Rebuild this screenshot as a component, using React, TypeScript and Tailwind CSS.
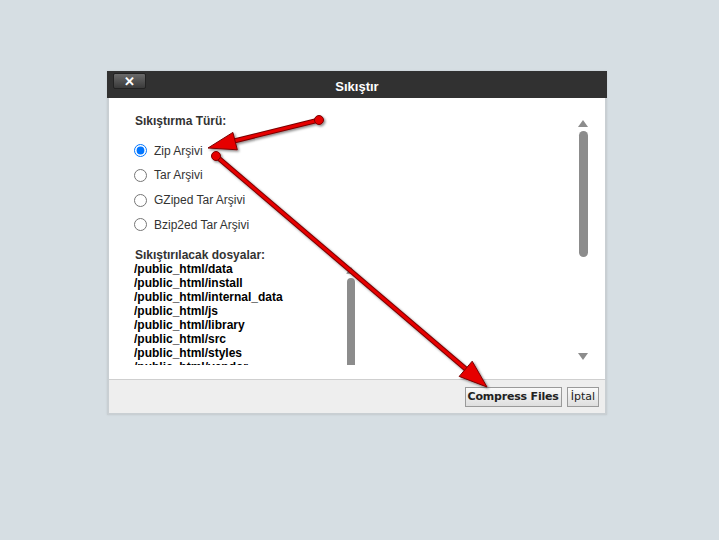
import React from 'react';

const archiveTypes = ['Zip Arşivi', 'Tar Arşivi', 'GZiped Tar Arşivi', 'Bzip2ed Tar Arşivi'];

const files = [
  '/public_html/data',
  '/public_html/install',
  '/public_html/internal_data',
  '/public_html/js',
  '/public_html/library',
  '/public_html/src',
  '/public_html/styles',
  '/public_html/vendor',
];

function Annotations() {
  return (
    <svg
      className="pointer-events-none absolute left-0 top-0"
      width="719"
      height="540"
      viewBox="0 0 719 540"
    >
      <defs>
        <filter id="shadow" x="-10%" y="-10%" width="120%" height="120%">
          <feDropShadow dx="1.5" dy="1.5" stdDeviation="1.2" floodColor="#000" floodOpacity="0.45" />
        </filter>
      </defs>
      <g filter="url(#shadow)">
        {/* arrow to Zip */}
        <line x1="319" y1="120" x2="234" y2="141" stroke="#7a0000" strokeWidth="5" strokeLinecap="round" />
        <line x1="319" y1="120" x2="234" y2="141" stroke="#e60000" strokeWidth="3" strokeLinecap="round" />
        <polygon points="208,148 237.3,149.8 232.9,132.4" fill="#e60000" stroke="#7a0000" strokeWidth="1" />
        <circle cx="319" cy="120" r="4.5" fill="#e60000" stroke="#7a0000" strokeWidth="1" />
        {/* arrow to Compress Files */}
        <line x1="216" y1="156" x2="467" y2="370" stroke="#7a0000" strokeWidth="5" strokeLinecap="round" />
        <line x1="216" y1="156" x2="467" y2="370" stroke="#e60000" strokeWidth="3" strokeLinecap="round" />
        <polygon points="487,387 459.2,376.4 472.2,361.2" fill="#e60000" stroke="#7a0000" strokeWidth="1" />
        <circle cx="216" cy="156" r="4.5" fill="#e60000" stroke="#7a0000" strokeWidth="1" />
      </g>
    </svg>
  );
}

function ScrollArrow({ up }: { up?: boolean }) {
  return (
    <svg width="10" height="7" viewBox="0 0 10 7">
      <polygon points={up ? '5,0 10,7 0,7' : '0,0 10,0 5,7'} fill="#8c8c8c" />
    </svg>
  );
}

export default function App() {
  return (
    <div className="relative h-[540px] w-[719px] overflow-hidden bg-[#d6dee3] pl-[107px] pt-[71px] font-['Liberation_Sans',Arial,sans-serif]">
      <div className="w-[500px] shadow-[0_0_2px_rgba(0,0,0,0.08)]">
        <div className="flex h-[27px] items-start bg-[#313131]">
          <div className="ml-[6px] mt-[2px] flex h-[16px] w-[33px] items-center justify-center rounded-[2px] border border-[#222] bg-[linear-gradient(#6a6a6a,#3a3a3a)] text-[13px] font-bold leading-none text-white">
            ✕
          </div>
          <div className="flex-1 pr-[39px] pt-[6px] text-center text-[13px] font-bold text-white">
            Sıkıştır
          </div>
        </div>

        <div className="border-x-2 border-b-2 border-[#c9cfd3]">
          <div className="flex h-[281px] bg-white">
            <div className="flex-1 pl-[25px] pt-[16px] text-[12px] text-[#222]">
              <div className="pl-[1px] font-bold leading-[14px] text-[#333]">Sıkıştırma Türü:</div>
              <div className="mt-[16px] flex flex-col gap-[11.8px]">
                {archiveTypes.map((t, i) => (
                  <label key={t} className="flex h-[13px] items-center">
                    <input
                      type="radio"
                      name="type"
                      defaultChecked={i === 0}
                      className="m-0 h-[13px] w-[13px]"
                    />
                    <span className="ml-[7px] text-[#333]">{t}</span>
                  </label>
                ))}
              </div>
              <div className="mt-[17px] pl-[1px] font-bold leading-[14px] text-[#333]">Sıkıştırılacak dosyalar:</div>
              <div className="flex h-[103px] w-[222px] overflow-hidden">
                <div className="flex-1 text-[12px] font-bold leading-[14px] text-black">
                  {files.map((f) => (
                    <div key={f}>{f}</div>
                  ))}
                </div>
                <div className="flex w-[10px] flex-col items-center pt-[5px]">
                  <ScrollArrow up />
                  <div className="mt-[4px] h-[90px] w-[8px] rounded-t-full bg-[#8c8c8c]" />
                </div>
              </div>
            </div>
            <div className="mr-[16px] flex w-[12px] flex-col items-center pb-[19px] pt-[22px]">
              <ScrollArrow up />
              <div className="mt-[4px] h-[126px] w-[9px] rounded-full bg-[#8c8c8c]" />
              <div className="flex-1" />
              <ScrollArrow />
            </div>
          </div>
          <div className="flex h-[34px] items-start justify-end gap-[5px] border-t border-[#cfcfcf] bg-[#eeeeee] pr-[6px] pt-[7px] font-['DejaVu_Sans',Verdana,sans-serif] text-[11px] text-[#222]">
            <button className="flex h-[20px] items-center border border-[#9a9a9a] bg-[linear-gradient(#fafafa,#dedede)] px-[2px] font-bold tracking-[-0.2px]">
              Compress Files
            </button>
            <button className="flex h-[20px] items-center border border-[#9a9a9a] bg-[linear-gradient(#fafafa,#dedede)] px-[3px]">
              İptal
            </button>
          </div>
        </div>
      </div>
      <Annotations />
    </div>
  );
}
